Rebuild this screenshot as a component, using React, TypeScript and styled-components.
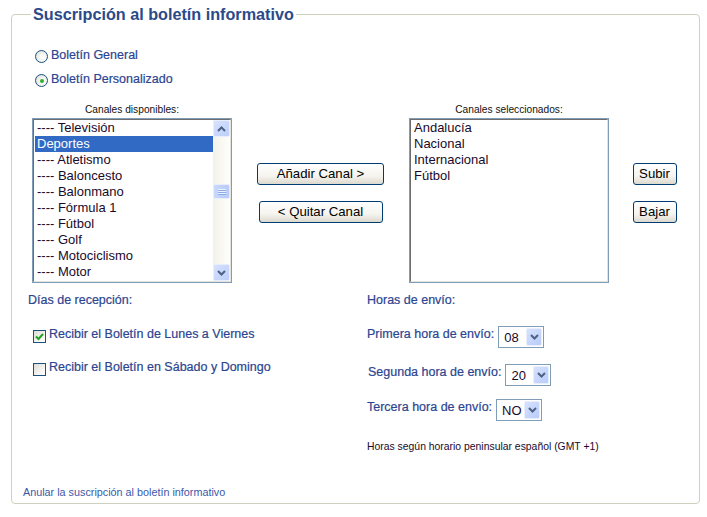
import React from 'react'
import styled, { createGlobalStyle } from 'styled-components'

const GlobalStyle = createGlobalStyle`
  body {
    margin: 0;
    background: #fff;
    font-family: "Liberation Sans", Arial, sans-serif;
  }
`

const Box = styled.div`
  box-sizing: border-box;
  margin: 14px 0 0 11px;
  width: 689px;
  height: 490px;
  border: 1px solid #d0d0bf;
  border-radius: 4px;
  display: flex;
  flex-direction: column;
`

const Title = styled.div`
  align-self: flex-start;
  margin: -10px 0 0 19px;
  padding: 0 2px;
  background: #fff;
  color: #2b4a8a;
  font-size: 16.2px;
  font-weight: bold;
  line-height: 18px;
`

const RadioGroup = styled.div`
  margin: 20px 0 0 23px;
`

const OptionRow = styled.label<{ h?: number }>`
  display: flex;
  align-items: center;
  height: ${({ h }) => h || 24}px;
  color: #2b4590;
  font-size: 12.5px;
  -webkit-text-stroke: 0.2px #2b4590;
`

const Radio = styled.span<{ checked?: boolean }>`
  box-sizing: border-box;
  width: 13px;
  height: 13px;
  margin-right: 3px;
  margin-top: 3px;
  border: 1px solid #1c5180;
  border-radius: 50%;
  background: radial-gradient(circle at 60% 60%, #fff 0%, #f2f2ee 45%, #d4d4cc 100%);
  display: flex;
  align-items: center;
  justify-content: center;

  &::after {
    content: '';
    display: ${({ checked }) => (checked ? 'block' : 'none')};
    width: 4px;
    height: 4px;
    border-radius: 50%;
    background: #2fb12f;
  }
`

const Check = styled.span`
  box-sizing: border-box;
  width: 13px;
  height: 13px;
  margin-right: 3px;
  margin-top: 5px;
  border: 1px solid #1c5180;
  background: linear-gradient(135deg, #dcdcd4 0%, #f4f4f0 60%, #fff 100%);
  display: flex;
  align-items: center;
  justify-content: center;
`

const ListsRow = styled.div`
  display: flex;
  margin: 13px 0 0 20px;
`

const ListColumn = styled.div`
  width: 200px;
  display: flex;
  flex-direction: column;
  align-items: center;
`

const ListLabel = styled.div`
  font-size: 10.2px;
  line-height: 12px;
  color: #111;
  margin-bottom: 2px;
`

const ListBox = styled.div`
  box-sizing: border-box;
  width: 200px;
  height: 165px;
  border: 1px solid #7f9db9;
  display: flex;
`

const ListInner = styled.div`
  flex: 1;
  display: flex;
  border-top: 1px solid #6d6d6d;
  border-left: 1px solid #6d6d6d;
  border-right: 1px solid #e4e3dc;
  border-bottom: 1px solid #e4e3dc;
`

const Items = styled.div`
  flex: 1;
  overflow: hidden;
`

const Item = styled.div<{ selected?: boolean }>`
  height: 16px;
  line-height: 16px;
  padding-left: 2px;
  margin-left: 1px;
  font-size: 13px;
  white-space: nowrap;
  color: ${({ selected }) => (selected ? '#fff' : '#1a0a2a')};
  background: ${({ selected }) => (selected ? '#316ac5' : 'transparent')};
`

const Scrollbar = styled.div`
  width: 17px;
  display: flex;
  flex-direction: column;
  background: linear-gradient(90deg, #f3f1ea 0%, #fefefb 100%);
`

const ScrollButton = styled.div`
  box-sizing: border-box;
  width: 17px;
  height: 17px;
  border: 1px solid #e8eefc;
  border-radius: 2px;
  background: linear-gradient(135deg, #d6e2fd 0%, #bccefa 100%);
  display: flex;
  align-items: center;
  justify-content: center;
`

const Track = styled.div`
  flex: 1;
  display: flex;
  flex-direction: column;
  padding-top: 47px;
`

const Thumb = styled.div`
  box-sizing: border-box;
  width: 17px;
  height: 15px;
  border: 1px solid #e8eefc;
  border-radius: 2px;
  background: linear-gradient(90deg, #c9d8fc 0%, #b8cbf9 100%);
  display: flex;
  flex-direction: column;
  justify-content: center;
  align-items: center;
  gap: 1px;

  span {
    width: 8px;
    height: 1px;
    background: #eef3fe;
    box-shadow: 0 1px 0 #8cabe9;
  }
`

const SideColumn = styled.div<{ w: number; pad?: number }>`
  box-sizing: border-box;
  width: ${({ w }) => w}px;
  flex-shrink: 0;
  padding: 0 0 2px ${({ pad }) => pad || 0}px;
  display: flex;
  flex-direction: column;
  align-items: center;
  justify-content: center;
  gap: 16px;
`

const Button = styled.button<{ w: number }>`
  box-sizing: border-box;
  width: ${({ w }) => w}px;
  height: 22px;
  padding: 0;
  border: 1px solid #003c74;
  border-radius: 3px;
  background: linear-gradient(180deg, #ffffff 0%, #f5f4ee 60%, #dcd9ce 100%);
  font-family: "Liberation Sans", Arial, sans-serif;
  font-size: 13.2px;
  color: #000;
`

const Bottom = styled.div`
  display: flex;
  margin-top: 9px;
`

const LeftCol = styled.div`
  width: 339px;
  padding-left: 16px;
`

const RightCol = styled.div`
  flex: 1;
`

const Heading = styled.div`
  height: 16px;
  line-height: 16px;
  font-size: 12.5px;
  color: #2b4590;
  -webkit-text-stroke: 0.2px #2b4590;
`

const CheckList = styled.div`
  margin: 16px 0 0 5px;
  display: flex;
  flex-direction: column;
  gap: 13px;
`

const HourList = styled.div`
  margin-top: 18px;
  display: flex;
  flex-direction: column;
`

const HourRow = styled.div<{ gap: number; shift?: number }>`
  display: flex;
  align-items: center;
  height: 22px;
  margin-top: ${({ gap }) => gap}px;
  padding-left: ${({ shift }) => shift || 0}px;
`

const HourLabel = styled.span`
  padding-bottom: 6px;
  font-size: 12.5px;
  color: #2b4590;
  -webkit-text-stroke: 0.2px #2b4590;
`

const Select = styled.div`
  box-sizing: border-box;
  width: 46px;
  height: 22px;
  margin-left: 4px;
  border: 1px solid #7f9db9;
  display: flex;
  align-items: center;
  padding: 1px;
`

const SelectValue = styled.div`
  flex: 1;
  font-size: 13px;
  padding-left: 4px;
  color: #1a0a2a;
`

const SelectArrow = styled.div`
  box-sizing: border-box;
  width: 16px;
  height: 18px;
  border: 1px solid #e8eefc;
  border-radius: 2px;
  background: linear-gradient(135deg, #d6e2fd 0%, #b9ccfa 100%);
  display: flex;
  align-items: center;
  justify-content: center;
`

const Note = styled.div`
  margin-top: 20px;
  font-size: 10.4px;
  line-height: 12px;
  color: #1a0a2a;
`

const Footer = styled.a`
  margin: auto 0 4px 11px;
  font-size: 10.8px;
  line-height: 14px;
  color: #3b58a8;
  text-decoration: none;
`

const Chevron = ({ up }: { up?: boolean }) => (
  <svg width="9" height="6" viewBox="0 0 9 6">
    <path
      d={up ? 'M1 5 L4.5 1.5 L8 5' : 'M1 1 L4.5 4.5 L8 1'}
      fill="none"
      stroke="#4d6185"
      strokeWidth="2"
    />
  </svg>
)

const CheckMark = () => (
  <svg width="9" height="9" viewBox="0 0 9 9">
    <path d="M1 4.5 L3.5 7 L8 2" fill="none" stroke="#21a121" strokeWidth="2" />
  </svg>
)

const available = [
  '---- Televisión',
  'Deportes',
  '---- Atletismo',
  '---- Baloncesto',
  '---- Balonmano',
  '---- Fórmula 1',
  '---- Fútbol',
  '---- Golf',
  '---- Motociclismo',
  '---- Motor',
]

const selectedChannels = ['Andalucía', 'Nacional', 'Internacional', 'Fútbol']

const hours = [
  { label: 'Primera hora de envío:', value: '08', gap: 0, shift: 0 },
  { label: 'Segunda hora de envío:', value: '20', gap: 16, shift: 1 },
  { label: 'Tercera hora de envío:', value: 'NO', gap: 13, shift: 0 },
]

export default function App() {
  return (
    <>
      <GlobalStyle />
      <Box>
        <Title>Suscripción al boletín informativo</Title>

        <RadioGroup>
          <OptionRow>
            <Radio />
            Boletín General
          </OptionRow>
          <OptionRow>
            <Radio checked />
            Boletín Personalizado
          </OptionRow>
        </RadioGroup>

        <ListsRow>
          <ListColumn>
            <ListLabel>Canales disponibles:</ListLabel>
            <ListBox>
              <ListInner>
                <Items>
                  {available.map((c, i) => (
                    <Item key={c} selected={i === 1}>{c}</Item>
                  ))}
                </Items>
                <Scrollbar>
                  <ScrollButton><Chevron up /></ScrollButton>
                  <Track>
                    <Thumb><span /><span /><span /></Thumb>
                  </Track>
                  <ScrollButton><Chevron /></ScrollButton>
                </Scrollbar>
              </ListInner>
            </ListBox>
          </ListColumn>

          <SideColumn w={177}>
            <Button w={127}>Añadir Canal &gt;</Button>
            <Button w={124}>&lt; Quitar Canal</Button>
          </SideColumn>

          <ListColumn>
            <ListLabel>Canales seleccionados:</ListLabel>
            <ListBox>
              <ListInner>
                <Items>
                  {selectedChannels.map(c => (
                    <Item key={c}>{c}</Item>
                  ))}
                </Items>
              </ListInner>
            </ListBox>
          </ListColumn>

          <SideColumn w={88} pad={3}>
            <Button w={44}>Subir</Button>
            <Button w={44}>Bajar</Button>
          </SideColumn>
        </ListsRow>

        <Bottom>
          <LeftCol>
            <Heading>Días de recepción:</Heading>
            <CheckList>
              <OptionRow h={20}>
                <Check><CheckMark /></Check>
                Recibir el Boletín de Lunes a Viernes
              </OptionRow>
              <OptionRow h={20}>
                <Check />
                Recibir el Boletín en Sábado y Domingo
              </OptionRow>
            </CheckList>
          </LeftCol>

          <RightCol>
            <Heading>Horas de envío:</Heading>
            <HourList>
              {hours.map(h => (
                <HourRow key={h.label} gap={h.gap} shift={h.shift}>
                  <HourLabel>{h.label}</HourLabel>
                  <Select>
                    <SelectValue>{h.value}</SelectValue>
                    <SelectArrow><Chevron /></SelectArrow>
                  </Select>
                </HourRow>
              ))}
            </HourList>
            <Note>Horas según horario peninsular español (GMT +1)</Note>
          </RightCol>
        </Bottom>

        <Footer href="#">Anular la suscripción al boletín informativo</Footer>
      </Box>
    </>
  )
}
